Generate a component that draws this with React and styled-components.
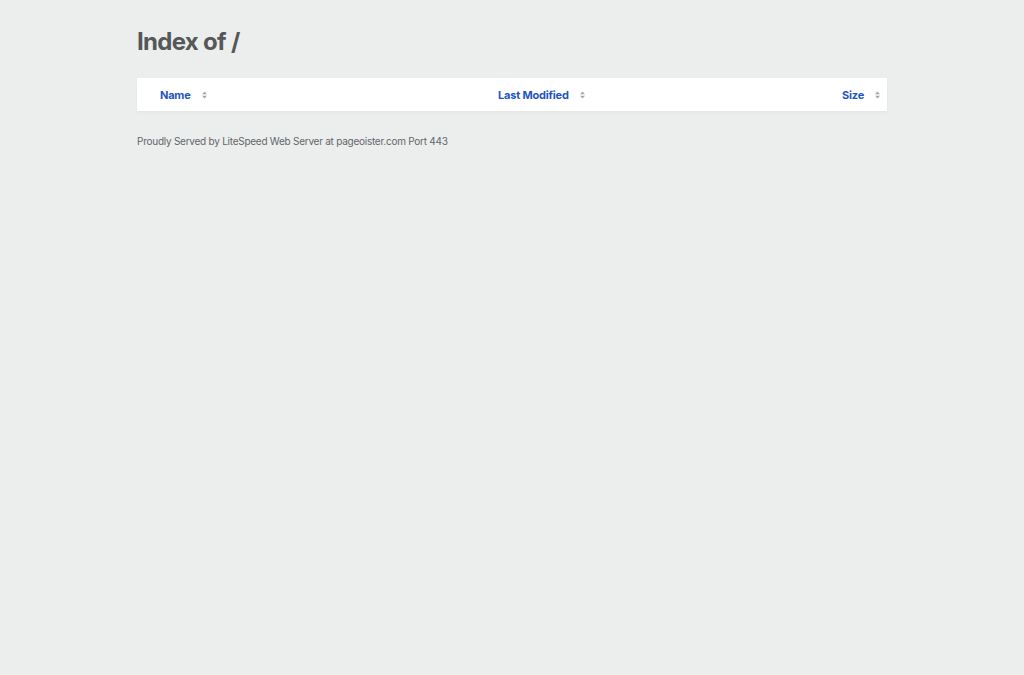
import styled, { createGlobalStyle } from 'styled-components';

const GlobalStyle = createGlobalStyle`
  html, body {
    margin: 0;
    padding: 0;
    background: #eceeed;
    font-family: Inter, "Liberation Sans", sans-serif;
  }
`;

const Page = styled.main`
  width: 750px;
  margin: 0 auto;
  padding-top: 27px;
`;

const Title = styled.h1`
  margin: 0 0 21px;
  font-size: 24px;
  line-height: 30px;
  font-weight: 700;
  letter-spacing: -0.7px;
  color: #555759;
`;

const Table = styled.div`
  background: #fff;
  box-shadow: 0 2px 4px rgba(0, 0, 0, 0.03);
`;

const HeaderRow = styled.div`
  display: grid;
  grid-template-columns: 338px 1fr 120px;
  align-items: center;
  height: 33px;
  padding: 0 6px 0 23px;
`;

const HeadCell = styled.div`
  display: flex;
  align-items: center;
  justify-content: ${(p) => (p.$right ? 'flex-end' : 'flex-start')};
  gap: 10px;
  font-size: 11px;
  font-weight: 700;
  letter-spacing: -0.2px;
  color: #1f55bf;
`;

const SortIcon = () => (
  <svg width="7" height="8" viewBox="0 0 7 8">
    <path d="M3.5 0.5 L6 3.2 H1 Z M3.5 7.5 L6 4.8 H1 Z" fill="#a3a6aa" />
  </svg>
);

const Footer = styled.p`
  margin: 24px 0 0;
  font-size: 10px;
  letter-spacing: -0.25px;
  color: #62666a;
`;

export default function App() {
  const columns = [
    { label: 'Name' },
    { label: 'Last Modified' },
    { label: 'Size', right: true },
  ];

  return (
    <>
      <GlobalStyle />
      <Page>
        <Title>Index of /</Title>
        <Table>
          <HeaderRow>
            {columns.map((col) => (
              <HeadCell key={col.label} $right={col.right}>
                {col.label}
                <SortIcon />
              </HeadCell>
            ))}
          </HeaderRow>
        </Table>
        <Footer>Proudly Served by LiteSpeed Web Server at pageoister.com Port 443</Footer>
      </Page>
    </>
  );
}
